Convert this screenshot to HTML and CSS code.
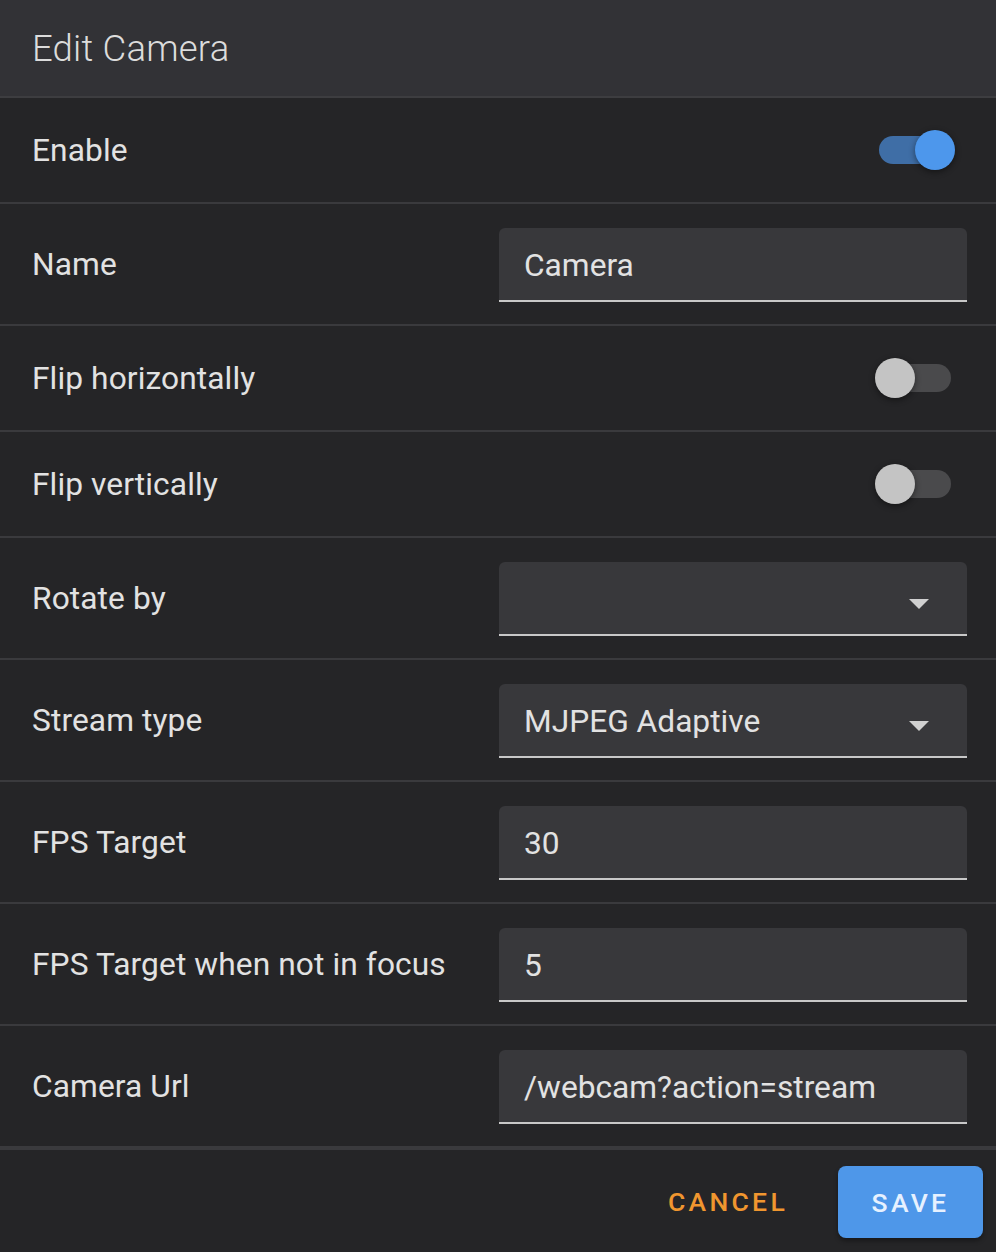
FILE: index.html
```html
<!DOCTYPE html>
<html>
<head>
<meta charset="utf-8">
<link rel="stylesheet" href="styles.css">
</head>
<body>
<div class="dialog">
  <div class="title">Edit Camera</div>
  <div class="rows">
    <div class="row row-switch">
      <div class="label">Enable</div>
      <div class="switch on"><span class="track"></span><span class="thumb"></span></div>
    </div>
    <div class="row row-field">
      <div class="label">Name</div>
      <div class="field"><span class="value">Camera</span></div>
    </div>
    <div class="row row-switch">
      <div class="label">Flip horizontally</div>
      <div class="switch"><span class="track"></span><span class="thumb"></span></div>
    </div>
    <div class="row row-switch">
      <div class="label">Flip vertically</div>
      <div class="switch"><span class="track"></span><span class="thumb"></span></div>
    </div>
    <div class="row row-field">
      <div class="label">Rotate by</div>
      <div class="field select"><span class="value"></span><svg class="arrow" width="20" height="10" viewBox="0 0 20 10"><path d="M0 0h20L10 10z" fill="#d0d0d0"/></svg></div>
    </div>
    <div class="row row-field">
      <div class="label">Stream type</div>
      <div class="field select"><span class="value">MJPEG Adaptive</span><svg class="arrow" width="20" height="10" viewBox="0 0 20 10"><path d="M0 0h20L10 10z" fill="#d0d0d0"/></svg></div>
    </div>
    <div class="row row-field">
      <div class="label">FPS Target</div>
      <div class="field"><span class="value">30</span></div>
    </div>
    <div class="row row-field">
      <div class="label">FPS Target when not in focus</div>
      <div class="field"><span class="value">5</span></div>
    </div>
    <div class="row row-field last">
      <div class="label">Camera Url</div>
      <div class="field"><span class="value">/webcam?action=stream</span></div>
    </div>
  </div>
  <div class="actions">
    <button class="btn btn-text">CANCEL</button>
    <button class="btn btn-primary">SAVE</button>
  </div>
</div>
</body>
</html>
```
FILE: styles.css
```css
html, body {
  margin: 0;
  padding: 0;
  background: #252527;
}
body {
  font-family: Roboto, "Noto Sans", sans-serif;
  color: #e0e0e0;
  width: 996px;
  height: 1252px;
  overflow: hidden;
}
.dialog {
  display: flex;
  flex-direction: column;
  height: 1252px;
  background: #252527;
}
.title {
  height: 96px;
  background: #323236;
  border-bottom: 2px solid #3d3d40;
  box-sizing: content-box;
  display: flex;
  align-items: center;
  padding-left: 32px;
  font-size: 36.5px;
  font-weight: 300;
  color: #dcdcdc;
  letter-spacing: 0.2px;
}
.rows {
  display: flex;
  flex-direction: column;
}
.row {
  display: flex;
  align-items: center;
  justify-content: space-between;
  padding: 0 29px 0 32px;
  border-bottom: 2px solid #3a3a3d;
}
.row.last {
  border-bottom-width: 4px;
}
.row-switch {
  height: 104px;
}
.row-field {
  height: 120px;
}
.label {
  font-size: 31.7px;
  color: #e2e2e2;
  letter-spacing: 0.1px;
}
.field {
  height: 70px;
  margin-top: 2px;
  background: #38383b;
  border-radius: 6px 6px 0 0;
  border-bottom: 2px solid #c8c8c8;
  display: flex;
  align-items: center;
  justify-content: space-between;
  padding: 2px 38px 0 25px;
  box-sizing: content-box;
  width: 405px;
}
.value {
  font-size: 31.7px;
  color: #e2e2e2;
}
.arrow {
  display: block;
  margin-top: 10px;
}
.switch {
  position: relative;
  width: 80px;
  height: 40px;
  margin-right: 12px;
}
.switch .track {
  position: absolute;
  left: 4px;
  top: 6px;
  width: 72px;
  height: 28px;
  border-radius: 14px;
  background: #4a4a4c;
}
.switch .thumb {
  position: absolute;
  left: 0;
  top: 0;
  width: 40px;
  height: 40px;
  border-radius: 50%;
  background: #c4c4c4;
  box-shadow: 0 2px 6px rgba(0,0,0,0.45);
}
.switch.on .track {
  background: #3f6ea6;
}
.switch.on .thumb {
  left: 40px;
  background: #4d97ec;
}
.actions {
  flex: 1;
  display: flex;
  align-items: center;
  justify-content: flex-end;
  padding: 0 13px 0 0;
  gap: 20px;
}
.btn {
  font-family: Roboto, "Noto Sans", sans-serif;
  font-size: 26.5px;
  font-weight: 500;
  letter-spacing: 3.3px;
  border: none;
  background: transparent;
  cursor: pointer;
  height: 72px;
  border-radius: 8px;
}
.btn-text {
  color: #f0962f;
  padding: 0 30px;
}
.btn-primary {
  background: #4e97e9;
  color: #e6f1ff;
  width: 145px;
  padding: 0;
  margin-top: 2px;
  box-shadow: 0 3px 4px rgba(0,0,0,0.35);
}
```
